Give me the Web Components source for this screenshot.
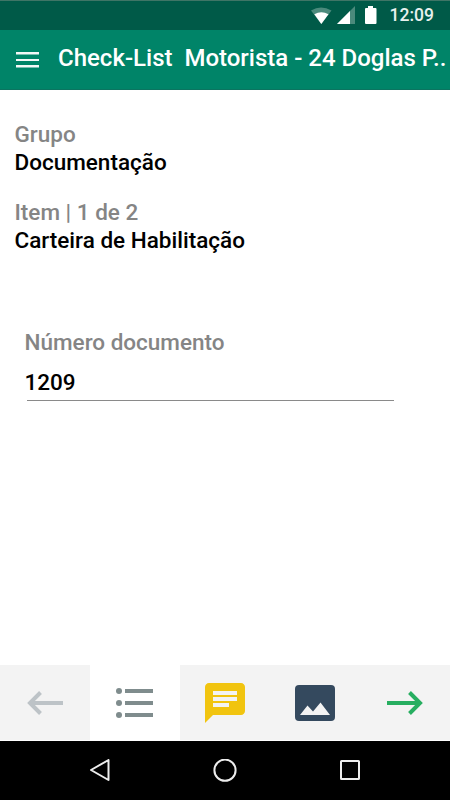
<!DOCTYPE html>
<html lang="pt-BR">
<head>
<meta charset="utf-8">
<title>Check-List</title>
<style>
  body {
    margin: 0;
    background: #fff;
    font-family: Roboto, "Liberation Sans", sans-serif;
    font-weight: 500;
  }
</style>
</head>
<body>
<check-screen>
  <status-bar slot="top">12:09</status-bar>
  <app-header slot="top">Check-List  Motorista - 24 Doglas P..</app-header>

  <info-block label="Grupo">Documentação</info-block>
  <info-block label="Item | 1 de 2">Carteira de Habilitação</info-block>
  <text-field label="Número documento">1209</text-field>

  <tab-bar slot="bottom">
    <tab-item>
      <svg width="48" height="48" viewBox="0 0 48 48" fill="none" stroke="#bdc3c7" stroke-width="4"><path d="M42 24H9M19.5 13.5L9 24l10.5 10.5"/></svg>
    </tab-item>
    <tab-item selected>
      <svg width="48" height="48" viewBox="0 0 48 48" fill="#7f8c8d"><circle cx="8" cy="12" r="3"/><circle cx="8" cy="24" r="3"/><circle cx="8" cy="36" r="3"/><path d="M14 10h28v4H14zM14 22h28v4H14zM14 34h28v4H14z"/></svg>
    </tab-item>
    <tab-item>
      <svg width="48" height="48" viewBox="0 0 24 24" fill="#f1c40f"><path d="M20 2H4c-1.1 0-2 .9-2 2v18l4-4h14c1.1 0 2-.9 2-2V4c0-1.1-.9-2-2-2zM6 9h12v2H6V9zm8 5H6v-2h8v2zm4-6H6V6h12v2z"/></svg>
    </tab-item>
    <tab-item>
      <svg width="48" height="48" viewBox="0 0 48 48"><rect x="4" y="6" width="40" height="36" rx="4" fill="#34495e"/><path d="M9 36l7.5-9.5 5.500 6 7.500-9L39 36z" fill="#f3f3f3"/></svg>
    </tab-item>
    <tab-item>
      <svg width="48" height="48" viewBox="0 0 48 48" fill="none" stroke="#27ae60" stroke-width="4"><path d="M6 24h33M28.500 13.500L39 24 28.500 34.500"/></svg>
    </tab-item>
  </tab-bar>
  <nav-bar slot="bottom"></nav-bar>
</check-screen>

<script>
// Attach an open shadow root and fill it with the given markup
function render(el, html) {
  const shadow = el.attachShadow({ mode: "open" });
  shadow.innerHTML = html;
  return shadow;
}

class CheckScreen extends HTMLElement {
  constructor() {
    super();
    render(this, `<style>
      :host {
        display: flex;
        flex-direction: column;
        width: 450px;
        height: 800px;
        overflow: hidden;
      }
      main {
        flex: 1;
        padding-top: 30px;
      }
    </style>
    <slot name="top"></slot>
    <main><slot></slot></main>
    <slot name="bottom"></slot>`);
  }
}

class StatusBar extends HTMLElement {
  constructor() {
    super();
    render(this, `<style>
      :host {
        display: flex;
        align-items: center;
        justify-content: flex-end;
        box-sizing: border-box;
        height: 30px;
        padding-right: 16px;
        border-top: 1px solid #3f7566;
        background: #005a48;
        color: #e8f1ee;
        font-size: 17.5px;
      }
      svg {
        margin-right: 13px;
      }
      span {
        line-height: 29px;
      }
    </style>
    <svg width="66" height="20" viewBox="0 0 66 20">
      <path d="M0 4.500Q10 -1.500 20.500 4.500L10.300 18z" fill="#4b8a7c"/>
      <path d="M3.300 8.300Q10.300 4 17.500 8.300L10.300 18z" fill="#fff"/>
      <path d="M44 0V18H26z" fill="#4b8a7c"/>
      <path d="M39 5V18H26z" fill="#fff"/>
      <path d="M57 0h5v2h2.500q1 0 1 1v14q0 1-1 1h-9.500q-1 0-1-1V3q0-1 1-1H57z" fill="#fff"/>
    </svg>
    <span><slot></slot></span>`);
  }
}

class AppHeader extends HTMLElement {
  constructor() {
    super();
    render(this, `<style>
      :host {
        display: flex;
        align-items: center;
        box-sizing: border-box;
        height: 60px;
        padding-left: 16px;
        border-bottom: 1px solid #0b7460;
        background: #008468;
        color: #fff;
        font-size: 24px;
      }
      svg {
        flex: none;
        margin-right: 19px;
      }
      span {
        white-space: pre;
        line-height: 28px;
        margin-top: -3px;
      }
    </style>
    <svg width="23" height="17" viewBox="0 0 23 17" fill="#f4f8f7"><path d="M0 1h23v2.500H0zM0 8h23v2H0zM0 14h23v2.500H0z"/></svg>
    <span><slot></slot></span>`);
  }
}

class InfoBlock extends HTMLElement {
  constructor() {
    super();
    render(this, `<style>
      :host {
        display: block;
        margin: 0 0 22px 14.5px;
        font-size: 22.5px;
        line-height: 28px;
      }
      .label {
        color: #858585;
      }
      .value {
        color: #000;
      }
    </style>
    <div class="label">${this.getAttribute("label")}</div>
    <div class="value"><slot></slot></div>`);
  }
}

class TextField extends HTMLElement {
  constructor() {
    super();
    render(this, `<style>
      :host {
        display: block;
        margin: 74px 56px 0 24.5px;
        font-size: 22.5px;
        line-height: 28px;
      }
      .label {
        color: #858585;
      }
      .value {
        margin-top: 12px;
        color: #000;
      }
      .line {
        height: 1px;
        margin: 4px 0 0 2px;
        background: #8a8a8a;
      }
    </style>
    <div class="label">${this.getAttribute("label")}</div>
    <div class="value"><slot></slot></div>
    <div class="line"></div>`);
  }
}

class TabBar extends HTMLElement {
  constructor() {
    super();
    render(this, `<style>
      :host {
        display: grid;
        grid-template-columns: repeat(5, 1fr);
        height: 75px;
        margin-bottom: 1px;
      }
    </style>
    <slot></slot>`);
  }
}

class TabItem extends HTMLElement {
  constructor() {
    super();
    render(this, `<style>
      :host {
        display: flex;
        align-items: center;
        justify-content: center;
        background: #f3f3f3;
      }
      :host([selected]) {
        background: #fff;
      }
      ::slotted(svg) {
        display: block;
        margin-top: 1px;
      }
    </style>
    <slot></slot>`);
  }
}

class NavBar extends HTMLElement {
  constructor() {
    super();
    render(this, `<style>
      :host {
        display: flex;
        align-items: center;
        justify-content: center;
        gap: 101px;
        height: 59px;
        background: #000;
      }
      svg {
        display: block;
        fill: none;
        stroke: #ededed;
        stroke-width: 2;
        stroke-linejoin: round;
      }
    </style>
    <svg width="24" height="24" viewBox="0 0 24 24"><path d="M3 11L20.500 1v20z"/></svg>
    <svg width="24" height="24" viewBox="0 0 24 24"><circle cx="12" cy="11.200" r="10.600"/></svg>
    <svg width="24" height="24" viewBox="0 0 24 24"><rect x="3" y="2" width="18" height="18" rx="0.500"/></svg>`);
  }
}

customElements.define("check-screen", CheckScreen);
customElements.define("status-bar", StatusBar);
customElements.define("app-header", AppHeader);
customElements.define("info-block", InfoBlock);
customElements.define("text-field", TextField);
customElements.define("tab-bar", TabBar);
customElements.define("tab-item", TabItem);
customElements.define("nav-bar", NavBar);
</script>
</body>
</html>
